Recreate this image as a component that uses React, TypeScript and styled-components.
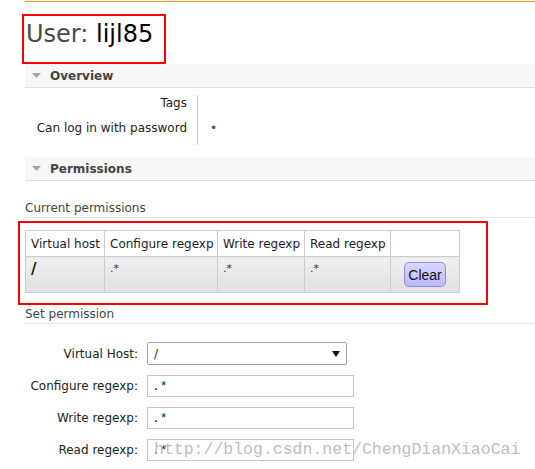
import React from 'react';
import styled, { createGlobalStyle } from 'styled-components';

const GlobalStyle = createGlobalStyle`
  html, body {
    margin: 0;
    padding: 0;
    background: #fff;
  }
  body {
    font-family: 'DejaVu Sans', Verdana, sans-serif;
    font-size: 12px;
    color: #333;
  }
`;

const Page = styled.div`
  position: relative;
  padding: 1px 0 20px 25px;
`;

const TopRule = styled.div`
  height: 1px;
  background: #f29426;
`;

const TitleBox = styled.div`
  width: 140px;
  height: 46px;
  margin: 12px 0 0 -3px;
  border: 2px solid #f00;
`;

const Title = styled.h1`
  margin: 0;
  padding: 4px 0 0 2px;
  font-size: 24px;
  line-height: 28px;
  font-weight: normal;
  color: #4a4a4a;
  white-space: nowrap;

  b {
    font-weight: normal;
    color: #000;
  }
`;

const SectionHeader = styled.h2<{ $gap?: number }>`
  display: flex;
  align-items: center;
  gap: 9px;
  height: 23px;
  margin: ${(p) => p.$gap ?? 0}px 0 0 0;
  padding-left: 7px;
  background: #f7f7f7;
  border-bottom: 1px solid #ddd;
  font-size: 12px;
  font-weight: bold;
  color: #444;
`;

const PropsGrid = styled.div`
  display: grid;
  grid-template-columns: 172px auto;
  margin-top: 7px;
`;

const PropLabel = styled.div`
  height: 25px;
  line-height: 17px;
  padding-right: 10px;
  text-align: right;
  color: #222;
`;

const PropValue = styled.div`
  height: 25px;
  line-height: 17px;
  padding-left: 12px;
  border-left: 1px solid #ccc;
  color: #555;
`;

const SubHeading = styled.h3<{ $gap: number }>`
  margin: ${(p) => p.$gap}px 0 0 0;
  padding-bottom: 1px;
  font-size: 12px;
  line-height: 16px;
  font-weight: normal;
  color: #444;
  border-bottom: 1px solid #e6e6e6;
`;

const Highlight = styled.div`
  box-sizing: border-box;
  width: 470px;
  margin: 3px 0 0 -7px;
  padding: 7px 27px 10px 5px;
  border: 2px solid #f00;
`;

const ListTable = styled.table`
  width: 435px;
  table-layout: fixed;
  border-collapse: collapse;
  border: 1px solid #ccc;
`;

const Th = styled.th`
  box-sizing: border-box;
  height: 26px;
  padding: 0 5px;
  border: 1px solid #ccc;
  background: #fff;
  font-weight: normal;
  text-align: left;
  color: #1a1a2a;
  white-space: nowrap;
`;

const Td = styled.td<{ $center?: boolean }>`
  box-sizing: border-box;
  height: 36px;
  padding: ${(p) => (p.$center ? '0' : '4px 5px 0 5px')};
  border: 1px solid #ccc;
  background: linear-gradient(#f0f0f0, #e0e0e0);
  vertical-align: ${(p) => (p.$center ? 'middle' : 'top')};
  text-align: ${(p) => (p.$center ? 'center' : 'left')};
`;

const Vhost = styled.span`
  font-size: 15px;
  line-height: 16px;
  font-weight: bold;
  color: #111;
`;

const Regex = styled.span`
  font-size: 11px;
  line-height: 16px;
  color: #333;
`;

const ClearButton = styled.button`
  height: 25px;
  padding: 0 3px;
  border: 1px solid #8f8fe0;
  border-radius: 5px;
  background: linear-gradient(#d8d8ff, #b9b9ff);
  font-family: 'Liberation Sans', Arial, sans-serif;
  font-size: 14px;
  color: #111;
  cursor: pointer;
`;

const Form = styled.form`
  display: grid;
  grid-template-columns: 113px auto;
  column-gap: 9px;
  row-gap: 10px;
  align-items: center;
  margin-top: 18px;
`;

const FormLabel = styled.label`
  text-align: right;
  color: #222;
  white-space: nowrap;
`;

const SelectWrap = styled.div`
  position: relative;
  width: 200px;
`;

const Select = styled.select`
  box-sizing: border-box;
  width: 200px;
  height: 23px;
  padding: 0 0 0 6px;
  border: 1px solid #a6a6a6;
  border-radius: 2px;
  background: #fff;
  appearance: none;
  font-family: 'DejaVu Sans', Verdana, sans-serif;
  font-size: 12px;
  color: #222;
`;

const Arrow = styled.svg`
  position: absolute;
  right: 7px;
  top: 9px;
  pointer-events: none;
`;

const TextInput = styled.input`
  box-sizing: border-box;
  width: 207px;
  height: 22px;
  padding: 0 0 0 4px;
  border: 1px solid #c6c6c6;
  border-radius: 0;
  font-family: 'Liberation Mono', 'Courier New', monospace;
  font-size: 13px;
  color: #222;
`;

const Watermark = styled.div`
  position: absolute;
  left: 154px;
  top: 440px;
  font-family: 'Liberation Mono', 'Courier New', monospace;
  font-size: 16.5px;
  color: #bdbdbd;
  white-space: nowrap;
  pointer-events: none;
`;

const Caret = () => (
  <svg width="9" height="5" viewBox="0 0 9 5">
    <path d="M0 0 L9 0 L4.5 5 Z" fill="#a3a3a3" />
  </svg>
);

const columns = ['Virtual host', 'Configure regexp', 'Write regexp', 'Read regexp', ''];
const widths = [79, 113, 87, 86, 69];

const regexFields = ['Configure regexp:', 'Write regexp:', 'Read regexp:'];

const App: React.FC = () => {
  return (
    <Page>
      <GlobalStyle />
      <TopRule />
      <TitleBox>
        <Title>
          User: <b>lijl85</b>
        </Title>
      </TitleBox>

      <SectionHeader>
        <Caret />
        Overview
      </SectionHeader>
      <PropsGrid>
        <PropLabel>Tags</PropLabel>
        <PropValue />
        <PropLabel>Can log in with password</PropLabel>
        <PropValue>•</PropValue>
      </PropsGrid>

      <SectionHeader $gap={12}>
        <Caret />
        Permissions
      </SectionHeader>

      <SubHeading $gap={19}>Current permissions</SubHeading>
      <Highlight>
        <ListTable>
          <colgroup>
            {widths.map((w, i) => (
              <col key={i} style={{ width: w }} />
            ))}
          </colgroup>
          <thead>
            <tr>
              {columns.map((c, i) => (
                <Th key={i}>{c}</Th>
              ))}
            </tr>
          </thead>
          <tbody>
            <tr>
              <Td>
                <Vhost>/</Vhost>
              </Td>
              <Td>
                <Regex>.*</Regex>
              </Td>
              <Td>
                <Regex>.*</Regex>
              </Td>
              <Td>
                <Regex>.*</Regex>
              </Td>
              <Td $center>
                <ClearButton type="button">Clear</ClearButton>
              </Td>
            </tr>
          </tbody>
        </ListTable>
      </Highlight>

      <SubHeading $gap={1}>Set permission</SubHeading>
      <Form onSubmit={(e) => e.preventDefault()}>
        <FormLabel htmlFor="vhost">Virtual Host:</FormLabel>
        <SelectWrap>
          <Select id="vhost" defaultValue="/">
            <option value="/">/</option>
          </Select>
          <Arrow width="8" height="6" viewBox="0 0 8 6">
            <path d="M0 0 L8 0 L4 6 Z" fill="#111" />
          </Arrow>
        </SelectWrap>
        {regexFields.map((f) => (
          <React.Fragment key={f}>
            <FormLabel>{f}</FormLabel>
            <TextInput type="text" defaultValue=".*" />
          </React.Fragment>
        ))}
      </Form>

      <Watermark>http://blog.csdn.net/ChengDianXiaoCai</Watermark>
    </Page>
  );
};

export default App;
